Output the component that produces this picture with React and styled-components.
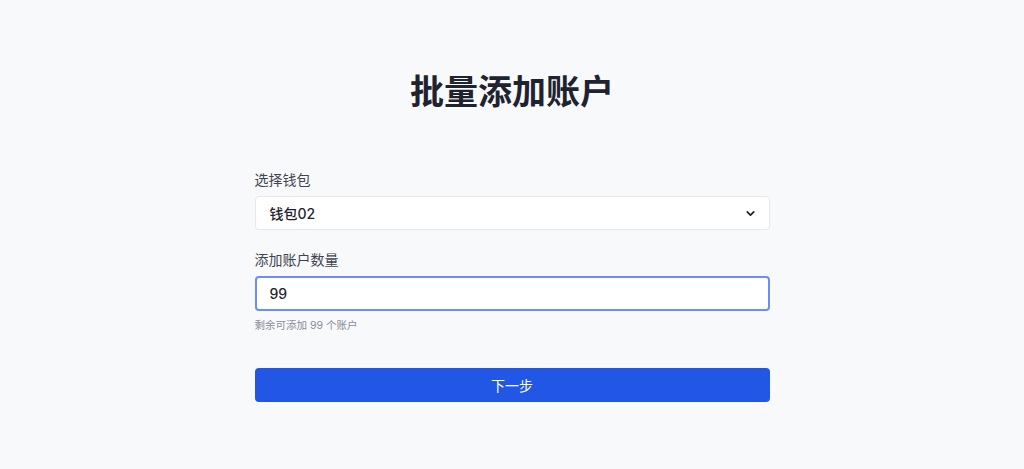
import React from "react";
import styled, { createGlobalStyle } from "styled-components";

const GlobalStyle = createGlobalStyle`
  html, body {
    margin: 0;
    padding: 0;
    background: #f8f9fb;
    font-family: Inter, "Noto Sans CJK SC", "Noto Sans", sans-serif;
  }
  * { box-sizing: border-box; }
`;

const Page = styled.div`
  min-height: 469px;
  display: flex;
  flex-direction: column;
  align-items: center;
  padding-top: 70px;
`;

const Title = styled.h1`
  margin: 0 0 56px;
  font-size: 34px;
  line-height: 44px;
  font-weight: 700;
  color: #1f2330;
`;

const Form = styled.div`
  width: 515px;
  display: flex;
  flex-direction: column;
`;

const Field = styled.div`
  display: flex;
  flex-direction: column;
  margin-bottom: ${(p) => p.$gap || 20}px;
`;

const Label = styled.label`
  font-size: 14px;
  line-height: 20px;
  color: #3f4451;
  margin-bottom: 6px;
`;

const SelectBox = styled.div`
  height: 34px;
  display: flex;
  align-items: center;
  justify-content: space-between;
  padding: 0 12px 0 14px;
  background: #fff;
  border: 1px solid #e6e8ec;
  border-radius: 4px;
  font-size: 14px;
  color: #1f2330;
  font-weight: 500;
`;

const Input = styled.input`
  height: 35px;
  padding: 0 13px;
  background: #fff;
  border: 2px solid #6b8ef5;
  border-radius: 4px;
  font-family: inherit;
  font-size: 14px;
  font-weight: 500;
  color: #1f2330;
  outline: none;
`;

const Hint = styled.div`
  margin-top: 7px;
  font-size: 10.5px;
  line-height: 16px;
  color: #878c99;
`;

const Button = styled.button`
  height: 34px;
  border: none;
  border-radius: 4px;
  background: #2257e6;
  color: #fff;
  font-family: inherit;
  font-size: 14px;
  cursor: pointer;
`;

const Chevron = () => (
  <svg width="13" height="13" viewBox="0 0 24 24" fill="none" stroke="#1f2330" strokeWidth="3.2" strokeLinecap="round" strokeLinejoin="round">
    <path d="m6 9 6 6 6-6" />
  </svg>
);

export default function App() {
  return (
    <>
      <GlobalStyle />
      <Page>
        <Title>批量添加账户</Title>
        <Form>
          <Field $gap={20}>
            <Label>选择钱包</Label>
            <SelectBox>
              <span>钱包02</span>
              <Chevron />
            </SelectBox>
          </Field>
          <Field $gap={34}>
            <Label>添加账户数量</Label>
            <Input defaultValue="99" />
            <Hint>剩余可添加 99 个账户</Hint>
          </Field>
          <Button>下一步</Button>
        </Form>
      </Page>
    </>
  );
}
